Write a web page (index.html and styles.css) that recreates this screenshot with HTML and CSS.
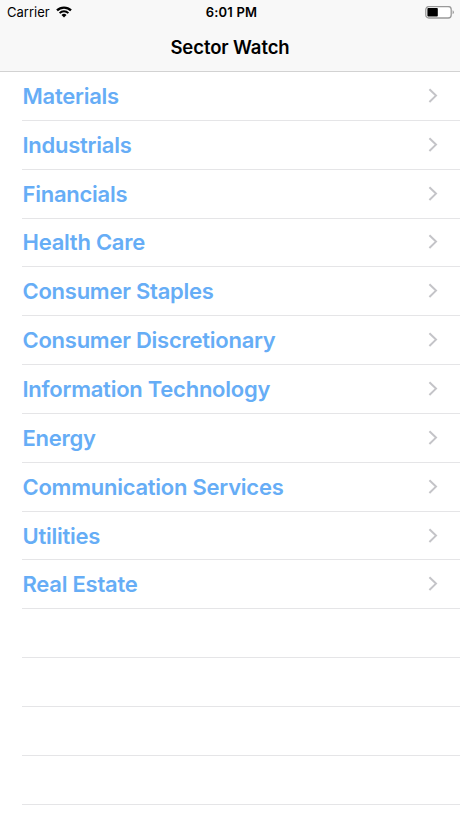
FILE: index.html
```html
<!DOCTYPE html>
<html lang="en">
<head>
    <meta charset="UTF-8">
    <meta name="viewport" content="width=device-width, initial-scale=1.0">
    <title>Sector Watch</title>
    <link rel="stylesheet" href="styles.css">
</head>
<body>
    <header>
        <div class="status-bar">
            <div class="carrier">
                <span>Carrier</span>
                <svg class="wifi" viewBox="0 0 16 12" width="16" height="12">
                    <path d="M1 4.4a10 10 0 0 1 14 0" fill="none" stroke="#000" stroke-width="2.3"/>
                    <path d="M3.6 7.1a6.3 6.3 0 0 1 8.8 0" fill="none" stroke="#000" stroke-width="2"/>
                    <path d="M8 11.6L5.5 9.1a3.5 3.5 0 0 1 5 0z"/>
                </svg>
            </div>
            <div class="time">6:01 PM</div>
            <svg class="battery" viewBox="0 0 30 13" width="30" height="13">
                <rect x="0.8" y="0.6" width="25.4" height="11.4" rx="3" fill="#fff" stroke="#999" stroke-width="1.3"/>
                <rect x="2.4" y="2.1" width="10.4" height="8.4" rx="0.8"/>
                <path d="M27.6 4.3v4a2.2 2.2 0 0 0 0-4z" fill="#999"/>
            </svg>
        </div>
        <h1>Sector Watch</h1>
    </header>

    <ul class="sector-list" id="sectors"></ul>

    <script>
        const sectors = [
            "Materials",
            "Industrials",
            "Financials",
            "Health Care",
            "Consumer Staples",
            "Consumer Discretionary",
            "Information Technology",
            "Energy",
            "Communication Services",
            "Utilities",
            "Real Estate"
        ];
        const totalRows = 15;

        function displaySectors() {
            const list = document.getElementById('sectors');
            let rows = '';
            for (let i = 0; i < totalRows; i++) {
                if (i < sectors.length) {
                    rows += `
                        <li class="sector">
                            <span class="name">${sectors[i]}</span>
                            <svg class="chevron" viewBox="0 0 10 16" width="10" height="16">
                                <path d="M1.4 1.2L8 7.6l-6.6 6.4" fill="none" stroke="#c4c4c8" stroke-width="2"/>
                            </svg>
                        </li>
                    `;
                } else {
                    rows += '<li class="sector"></li>';
                }
            }
            list.innerHTML = rows;
        }

        displaySectors();
    </script>
</body>
</html>
```
FILE: styles.css
```css
* {
    box-sizing: border-box;
}

body {
    font-family: Inter, "Liberation Sans", sans-serif;
    background-color: #fff;
    color: #000;
    margin: 0;
    height: 818px;
    overflow: hidden;
}

header {
    height: 72px;
    background-color: #f8f8f8;
    border-bottom: 1px solid #d2d2d2;
}

.status-bar {
    display: grid;
    grid-template-columns: 1fr auto 1fr;
    align-items: center;
    height: 24px;
    padding: 0 5px 0 7px;
    font-size: 13px;
}

.carrier {
    display: flex;
    align-items: center;
    gap: 6px;
}

.wifi {
    margin-top: -1px;
}

.time {
    font-weight: 600;
    letter-spacing: 0.2px;
    padding-left: 1px;
}

.battery {
    justify-self: end;
}

h1 {
    margin: 0;
    font-size: 18.5px;
    font-weight: 600;
    letter-spacing: -0.1px;
    line-height: 47px;
    text-align: center;
}

.sector-list {
    list-style: none;
    margin: 0;
    padding: 0 0 0 22px;
}

.sector {
    display: flex;
    align-items: center;
    justify-content: space-between;
    height: 48.85px;
    padding-right: 22px;
    border-bottom: 1px solid #e5e5e7;
}

.name {
    color: #66adf6;
    font-size: 22px;
    font-weight: 600;
    letter-spacing: -0.25px;
    padding-left: 0.5px;
}
```
